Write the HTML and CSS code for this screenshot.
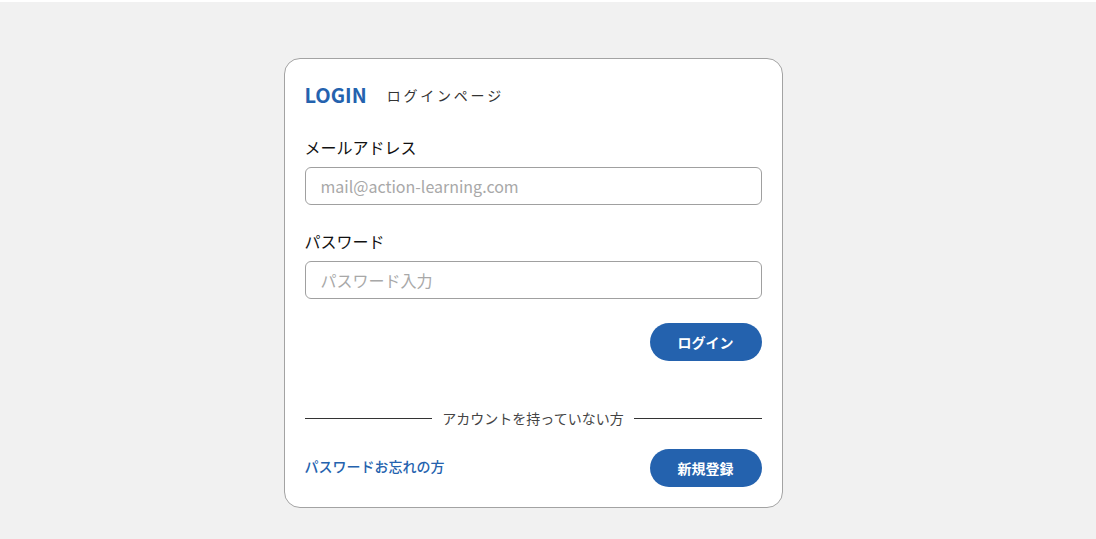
FILE: index.html
```html
<!DOCTYPE html>
<html lang="ja">
<head>
<meta charset="utf-8">
<title>LOGIN</title>
<link rel="stylesheet" href="styles.css">
</head>
<body>
<main class="page">
  <section class="card">
    <header class="card-head">
      <h1 class="title">LOGIN</h1>
      <span class="subtitle">ログインページ</span>
    </header>
    <form class="form">
      <label class="label label-first" for="email">メールアドレス</label>
      <input class="input" id="email" type="email" placeholder="mail@action-learning.com">
      <label class="label label-second" for="pw">パスワード</label>
      <input class="input" id="pw" type="password" placeholder="パスワード入力">
      <div class="actions">
        <button class="btn" type="button">ログイン</button>
      </div>
    </form>
    <div class="divider"><span class="divider-text">アカウントを持っていない方</span></div>
    <div class="bottom">
      <a class="link" href="#">パスワードお忘れの方</a>
      <button class="btn" type="button">新規登録</button>
    </div>
  </section>
</main>
</body>
</html>
```

FILE: styles.css
```css
* { box-sizing: border-box; }
html, body { margin: 0; padding: 0; }
body {
  background: #ffffff;
  font-family: "Noto Sans CJK JP", "Noto Sans", sans-serif;
  color: #222;
}
.page {
  margin-top: 2px;
  height: 537px;
  background: #f1f1f1;
  display: flex;
  justify-content: center;
  align-items: flex-start;
  padding: 56px 30px 0 0;
}
.card {
  width: 499px;
  background: #fff;
  border: 1px solid #a3a3a3;
  border-radius: 16px;
  padding: 21px 20px 20px;
  display: flex;
  flex-direction: column;
}
.card-head {
  display: flex;
  align-items: center;
  height: 30px;
}
.title {
  margin: 0;
  font-size: 20px;
  font-weight: 700;
  line-height: 30px;
  color: #2462ae;
}
.subtitle {
  margin-left: 20px;
  font-size: 14px;
  letter-spacing: 0.2em;
  color: #333;
}
.form {
  display: flex;
  flex-direction: column;
}
.label {
  font-size: 16px;
  line-height: 24px;
  color: #111;
}
.label-first { margin-top: 25px; margin-bottom: 8px; }
.label-second { margin-top: 24px; margin-bottom: 8px; }
.input {
  width: 100%;
  height: 38px;
  border: 1px solid #a0a0a0;
  border-radius: 6px;
  padding: 0 15px;
  font-family: inherit;
  font-size: 16px;
  color: #222;
  background: #fff;
  outline: none;
}
.input::placeholder { color: #a8a8a8; }
.actions {
  display: flex;
  justify-content: flex-end;
  margin-top: 24px;
}
.btn {
  width: 112px;
  height: 38px;
  border: none;
  border-radius: 19px;
  background: #2462ae;
  color: #fff;
  font-family: inherit;
  font-size: 14px;
  font-weight: 700;
  cursor: pointer;
}
.divider {
  display: flex;
  align-items: center;
  gap: 10px;
  margin-top: 47px;
  height: 21px;
}
.divider::before, .divider::after {
  content: "";
  flex: 1;
  height: 1px;
  background: #333;
}
.divider-text {
  font-size: 14px;
  line-height: 21px;
  color: #444;
}
.bottom {
  display: flex;
  justify-content: space-between;
  align-items: center;
  margin-top: 20px;
}
.link {
  margin-bottom: 4px;
  font-size: 14px;
  font-weight: 500;
  line-height: 21px;
  color: #2462ae;
  text-decoration: none;
}
```
